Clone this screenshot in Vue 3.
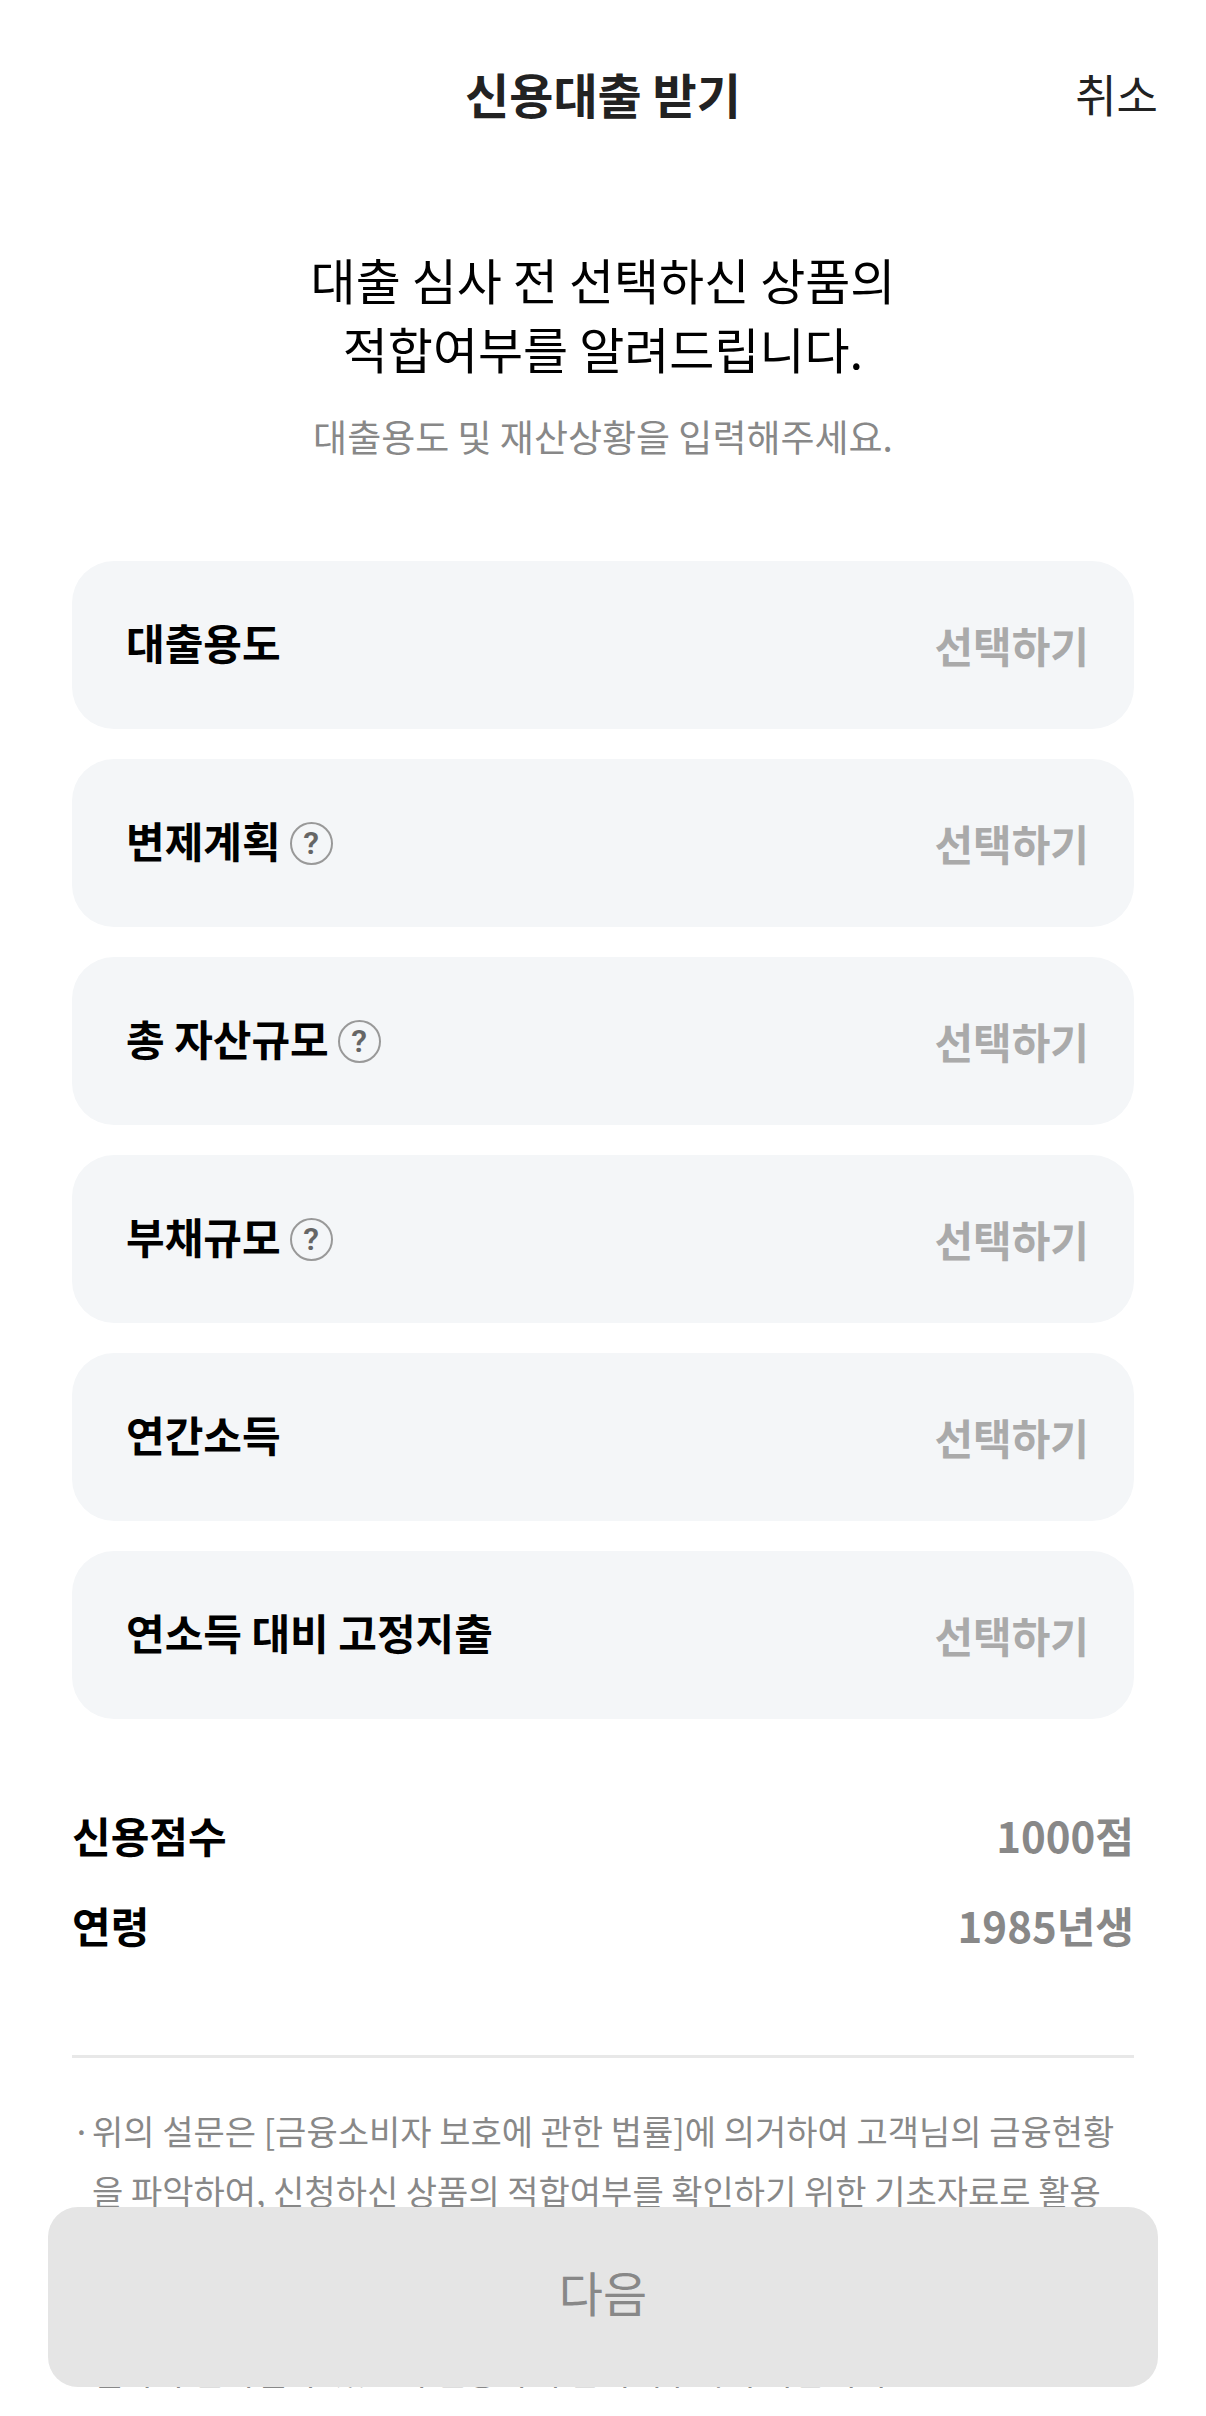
<template>
  <div class="loan-page">
    <header class="top-bar">
      <h1 class="top-title">신용대출 받기</h1>
      <button type="button" class="cancel-button">취소</button>
    </header>

    <main class="content">
      <h2 class="headline">
        대출 심사 전 선택하신 상품의<br />
        적합여부를 알려드립니다.
      </h2>
      <p class="sub-text">대출용도 및 재산상황을 입력해주세요.</p>

      <div class="field-list">
        <div v-for="field in fields" :key="field.id" class="field-card">
          <span :id="`${field.id}-label`" class="field-label">{{ field.label }}</span>
          <button
            v-if="field.help"
            type="button"
            class="help-button"
            :aria-label="`${field.label} 도움말`"
          >?</button>
          <button
            :id="field.id"
            type="button"
            class="select-button"
            :aria-labelledby="`${field.id}-label ${field.id}`"
          >선택하기</button>
        </div>
      </div>

      <dl class="info-list">
        <div v-for="info in infos" :key="info.label" class="info-row">
          <dt>{{ info.label }}</dt>
          <dd>{{ info.value }}</dd>
        </div>
      </dl>

      <ul class="notes">
        <li v-for="note in notes" :key="note">{{ note }}</li>
      </ul>
    </main>

    <footer class="bottom-bar">
      <button type="button" class="next-button" disabled>다음</button>
    </footer>
  </div>
</template>

<script setup>
const fields = [
  { id: 'purpose', label: '대출용도', help: false },
  { id: 'repayment', label: '변제계획', help: true },
  { id: 'assets', label: '총 자산규모', help: true },
  { id: 'debts', label: '부채규모', help: true },
  { id: 'income', label: '연간소득', help: false },
  { id: 'expense', label: '연소득 대비 고정지출', help: false }
]

const infos = [
  { label: '신용점수', value: '1000점' },
  { label: '연령', value: '1985년생' }
]

const notes = [
  '위의 설문은 [금융소비자 보호에 관한 법률]에 의거하여 고객님의 금융현황을 파악하여, 신청하신 상품의 적합여부를 확인하기 위한 기초자료로 활용됩니다.',
  '입력하신 정보가 사실과 다르거나 정확하지 않은 경우에는 적합여부 확인 결과가 달라질 수 있으니 신중하게 입력해주시기 바랍니다.'
]
</script>

<style>
body {
  margin: 0;
  background: #fff;
}
</style>

<style scoped>
.loan-page {
  min-height: 100vh;
  font-family: "Noto Sans CJK KR", "Noto Sans", sans-serif;
  color: #000;
}

button {
  padding: 0;
  border: 0;
  background: none;
  font-family: inherit;
  cursor: pointer;
}

.top-bar {
  display: grid;
  grid-template-columns: 1fr auto 1fr;
  align-items: center;
  height: 186px;
  padding: 0 48px;
}

.top-title {
  grid-column: 2;
  margin: 0;
  font-size: 48px;
  line-height: 69px;
  font-weight: 700;
  color: #222;
}

.cancel-button {
  justify-self: end;
  font-size: 45px;
  line-height: 69px;
  color: #222;
}

.content {
  padding: 58px 72px 0;
}

.headline {
  margin: 0 0 27px;
  font-size: 49px;
  line-height: 69px;
  font-weight: 400;
  text-align: center;
}

.sub-text {
  margin: 0 0 98px;
  font-size: 37px;
  line-height: 54px;
  text-align: center;
  color: #888;
}

.field-list {
  display: flex;
  flex-direction: column;
  gap: 30px;
}

.field-card {
  display: flex;
  align-items: center;
  gap: 9px;
  height: 168px;
  padding: 0 45px 0 54px;
  box-sizing: border-box;
  border-radius: 42px;
  background: #f4f6f8;
}

.field-label {
  padding-bottom: 6px;
  font-size: 42px;
  line-height: 60px;
  font-weight: 700;
}

.help-button {
  width: 43px;
  height: 43px;
  border: 2px solid #999;
  border-radius: 50%;
  font-family: Roboto, sans-serif;
  font-size: 32px;
  line-height: 39px;
  font-weight: 600;
  color: #666;
}

.select-button {
  margin-left: auto;
  font-size: 42px;
  line-height: 60px;
  font-weight: 700;
  color: #aaa;
}

.info-list {
  display: flex;
  flex-direction: column;
  gap: 30px;
  margin: 86px 0 100px;
}

.info-row {
  display: flex;
  justify-content: space-between;
  font-size: 42px;
  line-height: 60px;
  font-weight: 700;
}

.info-row dd {
  margin: 0;
  color: #888;
}

.notes {
  margin: 0;
  padding: 43px 6px 0 0;
  border-top: 3px solid #e8e8e8;
  list-style: none;
  font-size: 34px;
  line-height: 60px;
  color: #888;
}

.notes li {
  display: flex;
  word-break: break-all;
}

.notes li::before {
  content: "·";
  flex: none;
  width: 20px;
}

.bottom-bar {
  position: fixed;
  right: 0;
  bottom: 29px;
  left: 0;
  padding: 0 48px;
}

.next-button {
  display: block;
  width: 100%;
  height: 180px;
  padding-bottom: 12px;
  border-radius: 30px;
  background: #e5e5e5;
  font-size: 48px;
  line-height: 69px;
  color: #888;
}
</style>
